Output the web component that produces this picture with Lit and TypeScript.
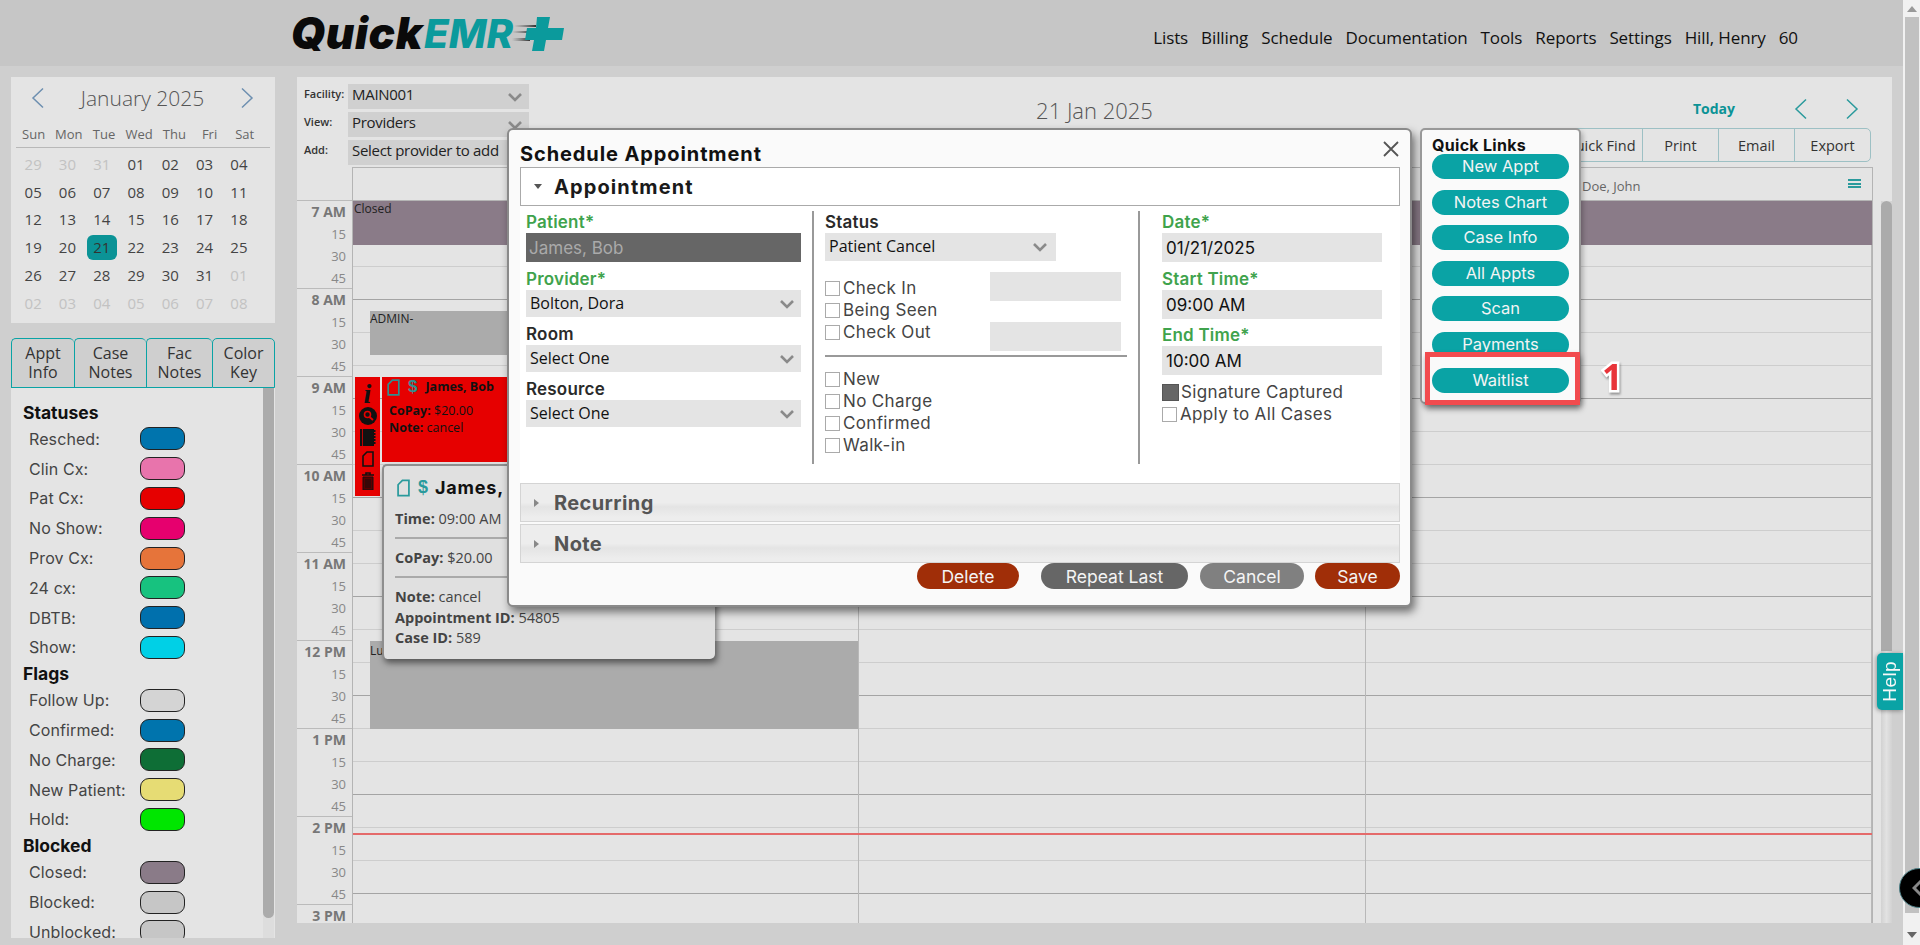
import { LitElement, html, css, svg } from "lit";
import { customElement } from "lit/decorators.js";

const chevronDown = html`<svg class="chev" width="16" height="10" viewBox="0 0 16 10"><path d="M2 2l6 6 6-6" fill="none" stroke="#8a8a8a" stroke-width="2.6"/></svg>`;
const arrowL = (c: string) => html`<svg width="14" height="22" viewBox="0 0 14 22"><path d="M12 1.5L2 11l10 9.5" fill="none" stroke="${c}" stroke-width="1.5"/></svg>`;
const arrowR = (c: string) => html`<svg width="14" height="22" viewBox="0 0 14 22"><path d="M2 1.5L12 11 2 20.5" fill="none" stroke="${c}" stroke-width="1.5"/></svg>`;
const fileIcon = (c: string, w = 12, h = 16) => html`<svg width="${w}" height="${h}" viewBox="0 0 12 16"><path d="M1 5l4-4h6v14H1z" fill="none" stroke="${c}" stroke-width="1.6"/></svg>`;

const weekdays = ["Sun", "Mon", "Tue", "Wed", "Thu", "Fri", "Sat"];
const days: [string, boolean][] = [
  ...["29", "30", "31"].map((d) => [d, true] as [string, boolean]),
  ...Array.from({ length: 31 }, (_, i) => [String(i + 1).padStart(2, "0"), false] as [string, boolean]),
  ...["01", "02", "03", "04", "05", "06", "07", "08"].map((d) => [d, true] as [string, boolean]),
];

const legend: { title: string; items: [string, string][] }[] = [
  { title: "Statuses", items: [["Resched:", "#0074ad"], ["Clin Cx:", "#e874ac"], ["Pat Cx:", "#e60000"], ["No Show:", "#e6006e"], ["Prov Cx:", "#e6743a"], ["24 cx:", "#17c27f"], ["DBTB:", "#0070ad"], ["Show:", "#00d0e6"]] },
  { title: "Flags", items: [["Follow Up:", "#d4d4d4"], ["Confirmed:", "#0074ad"], ["No Charge:", "#0e6e36"], ["New Patient:", "#e6dc74"], ["Hold:", "#00e600"]] },
  { title: "Blocked", items: [["Closed:", "#8a7b88"], ["Blocked:", "#c6c6c6"], ["Unblocked:", "#c6c6c6"]] },
];

const hours = ["7 AM", "8 AM", "9 AM", "10 AM", "11 AM", "12 PM", "1 PM", "2 PM"];
const slots = Array.from({ length: 22 }, (_, i) => i);

@customElement("app-root")
export class AppRoot extends LitElement {
  static styles = css`
    :host { display: block; position: relative; width: 1920px; height: 945px; overflow: hidden; background: #cfcfcf;
      font-family: "Open Sans", sans-serif; color: #222; --m: Inter, "Noto Sans", sans-serif; --teal: #0aa3a5; }
    * { box-sizing: border-box; }
    .page { display: flex; height: 945px; }
    .content { width: 1903px; }
    .header { height: 66px; background: #c6c6c6; display: flex; align-items: flex-start; position: relative; }
    .logo { margin: 11px 0 0 291px; display: flex; align-items: center; height: 45px; font-family: Inter, sans-serif; font-style: italic; font-size: 44px; line-height: 45px; }
    .logo .q { font-weight: 900; color: #0a0a0a; letter-spacing: .6px; }
    .logo .e { font-weight: 800; color: #0b9a9c; margin-left: 1px; font-size: 40px; }
    .logo svg { margin-left: -1px; }
    .nav { margin-left: auto; margin-right: 105px; margin-top: 27px; display: flex; gap: 13px; font-size: 17px; line-height: 22px; color: #111; letter-spacing: -.1px; }
    .body { display: flex; padding-top: 11px; }
    .side { width: 264px; margin-left: 11px; display: flex; flex-direction: column; }
    .cal { height: 246px; background: #e4e4e4; position: relative; padding: 0 5px; }
    .calhead { height: 44px; display: flex; align-items: center; justify-content: space-between; padding: 0 16px 3px 15px; }
    .calhead span { font-size: 21px; font-weight: 300; color: #555; }
    .wk { display: grid; grid-template-columns: repeat(7, 35.2px); height: 27px; align-items: center; border-bottom: 1px solid #b8b8b8; font-size: 13px; color: #666; text-align: center; width: 254px; }
    .daygrid { display: grid; grid-template-columns: repeat(7, 34.3px); grid-auto-rows: 27.8px; margin-top: 2px; text-align: center; font-size: 15px; color: #444; align-items: center; justify-items: center; }
    .daygrid .o { color: #c2c2c2; }
    .daygrid .t { width: 30px; height: 25px; line-height: 25px; background: #0b9396; border-radius: 6px; color: #333; }
    .tabs { display: grid; grid-template-columns: 63px 72px 66px 63px; height: 50px; margin-top: 15px; }
    .tab { border: 1.5px solid var(--teal); border-top-left-radius: 5px; border-top-right-radius: 5px; border-right-width: 0; text-align: center; font-size: 16px; line-height: 19px; padding-top: 5px; color: #333; }
    .tab:last-child { border-right-width: 1.5px; }
    .legendwrap { height: 550px; background: #e4e4e4; display: flex; position: relative; overflow: hidden; }
    .legend { width: 252px; padding: 14px 0 0 12px; font-family: var(--m); }
    .legend h3 { margin: 0; height: 22px; line-height: 22px; font-size: 17.5px; font-weight: 700; color: #111; }
    .legend .grp + .grp { margin-top: 1px; }
    .lrow { height: 29.8px; display: flex; align-items: center; padding-left: 6px; font-size: 16px; color: #444; font-weight: 400; }
    .lrow span { width: 111px; white-space: nowrap; letter-spacing: .1px; }
    .lrow i { display: block; width: 45px; height: 23px; border: 1px solid #222; border-radius: 9px; }
    .sb { width: 11px; position: absolute; right: 1px; top: 0; bottom: 0; background: #ddd; }
    .sb b { display: block; height: 530px; background: #ababab; border-radius: 0 0 6px 6px; }
    .main { width: 1595px; margin-left: 22px; height: 846px; background: #e4e4e4; display: flex; flex-direction: column; }
    .tools { height: 90px; display: grid; grid-template-columns: 1fr auto 1fr; flex: none; }
    .filters { padding: 7px 0 0 7px; display: flex; flex-direction: column; gap: 3px; }
    .frow { display: flex; align-items: center; }
    .frow label { width: 44px; font-size: 11px; font-weight: 600; color: #333; align-self: flex-start; line-height: 20px; }
    .fsel { width: 181px; height: 25px; background: #d0d0d0; display: flex; justify-content: space-between; align-items: center; padding: 0 6px 5px 4px; font-size: 15px; color: #222; letter-spacing: -.3px; white-space: nowrap; }
    .fsel .chev { margin-top: 5px; }
    .title { font-size: 22px; font-weight: 300; color: #555; padding-top: 18px; line-height: 30px; }
    .rt { display: flex; flex-direction: column; align-items: flex-end; padding-right: 21px; }
    .nav2 { display: flex; align-items: center; height: 51px; padding: 12px 12px 0 0; }
    .nav2 b { font-size: 14px; color: #0b9396; margin-right: 59px; }
    .nav2 svg + svg { margin-left: 37px; }
    .bar { display: flex; height: 34px; border: 1px solid #9dc0c4; border-radius: 0 5px 5px 0; font-size: 14.5px; color: #333; }
    .bar span { display: flex; align-items: center; justify-content: center; border-left: 1px solid #9dc0c4; width: 76px; }
    .bar span:first-child { border-left: 0; width: 84px; }
    .sched { flex: 1; display: flex; overflow: hidden; min-height: 0; }
    .times { width: 55px; padding-top: 33px; flex: none; overflow: hidden; }
    .hr { height: 88px; border-top: 1px solid #bbb; text-align: right; padding-right: 6px; font-size: 13px; color: #888; }
    .hr div { height: 21.9px; line-height: 22px; }
    .hr div:first-child { font-weight: 700; font-size: 14px; color: #777; }
    .gridbox { width: 1521px; border-left: 1px solid #b4b4b4; border-right: 1px solid #b4b4b4; border-top: 1px solid #b4b4b4; flex: none; display: flex; flex-direction: column; min-height: 0; }
    .colhead { height: 33px; flex: none; display: grid; grid-template-columns: 506px 507px 1fr; border-bottom: 1px solid #b4b4b4; }
    .colhead .c3 { position: relative; font-size: 13px; color: #666; padding: 9px 0 0 216px; }
    .ham { position: absolute; right: 11px; top: 11px; width: 13px; height: 9px; border-top: 2px solid #2a9a9c; border-bottom: 2px solid #2a9a9c; }
    .ham::after { content: ""; display: block; margin-top: 1.5px; height: 2px; background: #2a9a9c; }
    .cols { flex: 1; min-height: 0; position: relative; display: grid; grid-template-columns: 506px 507px 1fr; overflow: hidden; }
    .col { border-right: 1px solid #b8b8b8; }
    .col:last-of-type { border-right: 0; }
    .slot { height: 33px; border-bottom: 1px solid #cdcdcd; }
    .slot.d { border-bottom: 1px solid #a4a4a4; }
    .block { position: absolute; font-size: 12px; color: #222; line-height: 16px; }
    .closed { left: 0; right: 0; top: 0; height: 44px; background: #8a7b88; padding-left: 1px; }
    .admin { left: 17px; width: 488px; top: 110px; height: 44px; background: #ababab; }
    .lunch { left: 17px; width: 488px; top: 440px; height: 88px; background: #ababab; padding-top: 2px; }
    .nowline { position: absolute; left: 0; right: 0; top: 632px; height: 2px; background: #e46a6a; }
    .acts { position: absolute; left: 2px; top: 176px; width: 25px; height: 119px; background: #e60000; display: flex; flex-direction: column; align-items: center; padding-top: 8px; gap: 4px; }
    .acts .i { font-family: "Liberation Serif", serif; font-style: italic; font-weight: 700; font-size: 28px; line-height: 18px; color: #111; height: 18px; }
    .card { position: absolute; left: 29px; top: 176px; width: 476px; height: 85px; background: #e60000; color: #111; font-size: 12.5px; line-height: 16.5px; }
    .card .top { display: flex; align-items: center; gap: 8px; height: 20px; padding-left: 5px; font-weight: 700; font-size: 12.5px; }
    .dollar { color: #2f8f90; font-weight: 700; font-family: "Liberation Sans", sans-serif; }
    .card .dollar { font-size: 17px; }
    .card .l { padding-left: 7px; }
    .card .top + .l { margin-top: 6px; }
    .scr { width: 11px; margin: 34px 0 0 8px; flex: none; background: linear-gradient(90deg, #d2d2d2, #e2e2e2 50%, #d2d2d2); position: relative; }
    .scr b { display: block; height: 450px; background: #ababab; border-radius: 6px 6px 0 0; }
    .pagesb { width: 17px; height: 945px; background: #f1f1f1; position: relative; }
    .pagesb b { position: absolute; left: 2px; top: 17px; width: 14px; height: 896px; background: #c1c1c1; }
    .pagesb .up, .pagesb .dn { position: absolute; left: 4px; width: 0; height: 0; border-left: 5px solid transparent; border-right: 5px solid transparent; }
    .pagesb .up { top: 6px; border-bottom: 6px solid #999; }
    .pagesb .dn { top: 932px; border-top: 6px solid #666; }
    .help { position: absolute; left: 1877px; top: 653px; width: 26px; height: 57px; background: var(--teal); border-radius: 5px 0 0 5px; color: #f8f8f8; font-family: "Liberation Sans", sans-serif; font-size: 19px; display: flex; align-items: center; justify-content: center; box-shadow: -1px 1px 4px rgba(0,0,0,.35); }
    .help span { writing-mode: vertical-rl; transform: rotate(180deg); letter-spacing: .4px; }
    .fab { position: absolute; left: 1899px; top: 868px; width: 40px; height: 40px; border-radius: 50%; background: #000; border: 1.5px solid #4d7f86; display: flex; align-items: center; padding-left: 12px; }
    .tip { position: absolute; left: 382px; top: 464px; width: 333px; height: 195px; background: #e0e0e0; border: 2px solid #8e8e8e; border-width: 2px 0 0 2px; border-radius: 5px; box-shadow: 2px 4px 6px rgba(0,0,0,.5); padding: 0 0 0 11px; font-size: 14.5px; color: #444; }
    .tip .n { display: flex; align-items: center; gap: 8px; height: 43px; padding-left: 2px; }
    .tip .n .nm { font-family: var(--m); font-weight: 700; font-size: 18px; color: #111; letter-spacing: .8px; margin-left: -1px; }
    .tip .n .dollar { font-size: 18px; color: #2a9a9c; }
    .tip p { margin: 0; line-height: 20.5px; white-space: nowrap; }
    .tip b { font-weight: 700; }
    .tip hr { border: 0; height: 2px; background: #aaa; margin: 7px 13px 9.500px 0; }
    .dialog { position: absolute; left: 507px; top: 128px; width: 905px; height: 479px; background: #fafafa; border: 2px solid #8a8a8a; border-radius: 6px; box-shadow: 3px 5px 8px rgba(0,0,0,.5); padding: 0 10px 0 11px; font-family: var(--m); }
    .dtitle { height: 37px; display: flex; align-items: center; justify-content: space-between; font-size: 20px; font-weight: 700; color: #111; padding-top: 10px; letter-spacing: .9px; }
    .dtitle svg { margin-right: 1px; margin-top: -10px; }
    .acc { height: 39px; border: 1px solid #aaa; background: #fff; display: flex; align-items: center; padding-left: 13px; font-size: 20px; font-weight: 700; color: #1a1a1a; gap: 12px; letter-spacing: 1.1px; }
    .tri { width: 0; height: 0; border-left: 4px solid transparent; border-right: 4px solid transparent; border-top: 5px solid #555; }
    .form { height: 277px; background: #fff; display: flex; padding: 5px 0 0 6px; }
    .c1 { width: 275px; }
    .div { width: 2px; height: 253px; background: #999; margin: 0 11px; flex: none; }
    .c2 { width: 302px; }
    .c3r { width: 220px; margin-left: 11px; }
    .lb { height: 22px; line-height: 22px; font-size: 17px; font-weight: 600; color: #2a2a2a; margin-top: 6px; letter-spacing: .2px; white-space: nowrap; }
    .lb.first { margin-top: 0; }
    .lb.g { color: #3fa34d; }
    .lb.s { margin-top: 5px; }
    .in { height: 29px; background: #e4e4e4; padding: 0 4px; display: flex; align-items: center; justify-content: space-between; font-size: 17px; color: #111; }
    .in.dis { background: #666; color: #aaa; font-size: 17px; padding-left: 3px; }
    .in.sel { height: 27px; font-family: "Open Sans", sans-serif; font-size: 16px; padding: 0 6px 1.500px 4px; }
    .in.sel .chev { margin-top: 2px; }
    .in.st { width: 231px; height: 28px; padding-right: 8px; }
    .ck { height: 22px; display: flex; align-items: center; gap: 3px; font-size: 17px; color: #444; white-space: nowrap; letter-spacing: .35px; }
    .ck i { display: block; width: 15px; height: 15px; border: 1.5px solid #aaa; background: #fff; flex: none; }
    .ck i.on { background: #666; border-color: #555; width: 17px; height: 17px; margin-right: -1px; }
    .statusrow { display: flex; height: 94px; padding-top: 16px; }
    .statusrow .l { width: 165px; }
    .statusrow .f { width: 131px; margin-top: -5px; }
    .statusrow .f div { height: 29px; background: #e4e4e4; margin-bottom: 21px; }
    .hrl { height: 2px; background: #999; margin-bottom: 11px; }
    .gap6 { height: 6px; }
    .rch { height: 39px; border: 1px solid #d4d4d4; background: linear-gradient(#ededed 50%, #e4e4e4 62%, #ededed 90%); display: flex; align-items: center; padding-left: 13px; gap: 15px; font-size: 20px; font-weight: 700; color: #555; letter-spacing: .4px; margin-bottom: 2px; }
    .tri2 { width: 0; height: 0; border-top: 4px solid transparent; border-bottom: 4px solid transparent; border-left: 5px solid #888; }
    .btns { display: flex; justify-content: flex-end; height: 26px; margin-top: -2px; font-size: 17.5px; color: #f4f4f4; font-family: var(--m); }
    .btns span { display: flex; align-items: center; justify-content: center; border-radius: 13px; height: 26px; }
    .ql { position: absolute; left: 1420px; top: 128px; width: 161px; height: 276px; background: #fafafa; border: 2px solid #999; border-radius: 5px; padding: 5px 0 0 10px; font-family: var(--m); box-shadow: 2px 3px 5px rgba(0,0,0,.25); }
    .ql h4 { margin: 0; height: 19px; line-height: 20px; font-size: 16px; font-weight: 700; color: #111; letter-spacing: .3px; }
    .qb { width: 137px; height: 25px; margin-bottom: 10.6px; border-radius: 13px; background: var(--teal); color: #f4f4f4; text-align: center; line-height: 24px; font-size: 16.5px; }
    .qb.w { position: relative; z-index: 2; }
    .annot { position: absolute; left: 3px; top: 222px; width: 155px; height: 53px; border: 5px solid #f24b4e; background: #fafafa; z-index: 1; box-shadow: 1px 4px 6px rgba(0,0,0,.4); }
    .one { position: absolute; left: 1602px; top: 353px; font-family: "Open Sans", sans-serif; font-weight: 700; font-size: 36px; line-height: 48px; color: #e8343a; -webkit-text-stroke: 5px #fff; paint-order: stroke fill; filter: drop-shadow(1px 2px 1px rgba(0,0,0,.35)); }
  `;

  private field(label: string, value: string, cls = "") {
    return html`<div class="lb g ${cls}">${label}</div><div class="in">${value}</div>`;
  }

  private sel(label: string, value: string, green = false) {
    return html`<div class="lb ${green ? "g" : ""}">${label}</div><div class="in sel">${value}${chevronDown}</div>`;
  }

  render() {
    return html`
      <div class="page">
        <div class="content">
          <div class="header">
            <div class="logo">
              <span class="q">Quick</span><span class="e">EMR</span>
              <svg width="52" height="36" viewBox="0 0 52 36">
                ${svg`<defs><linearGradient id="sp" x1="0" x2="1"><stop offset="0" stop-color="#555" stop-opacity="0"/><stop offset="1" stop-color="#333"/></linearGradient></defs>
                <rect x="2" y="9" width="22" height="2" fill="url(#sp)"/>
                <rect x="0" y="15" width="20" height="2" fill="url(#sp)"/>
                <rect x="0" y="22" width="18" height="3" fill="url(#sp)"/>
                <path d="M25 1h13l-2 11h16l-2 12H34l-2 11H20l2-11H13l2-12h9z" fill="#0b9a9c"/>`}
              </svg>
            </div>
            <div class="nav">
              ${["Lists", "Billing", "Schedule", "Documentation", "Tools", "Reports", "Settings", "Hill, Henry", "60"].map((n) => html`<span>${n}</span>`)}
            </div>
          </div>
          <div class="body">
            <div class="side">
              <div class="cal">
                <div class="calhead">${arrowL("#6d8fb0")}<span>January 2025</span>${arrowR("#6d8fb0")}</div>
                <div class="wk">${weekdays.map((d) => html`<div>${d}</div>`)}</div>
                <div class="daygrid">
                  ${days.map(([d, o]) => html`<div class="${o ? "o" : d === "21" ? "t" : ""}">${d}</div>`)}
                </div>
              </div>
              <div class="tabs">
                ${[["Appt", "Info"], ["Case", "Notes"], ["Fac", "Notes"], ["Color", "Key"]].map(([a, b]) => html`<div class="tab">${a}<br />${b}</div>`)}
              </div>
              <div class="legendwrap">
                <div class="legend">
                  ${legend.map((g) => html`<div class="grp">
                    <h3>${g.title}</h3>
                    ${g.items.map(([l, c]) => html`<div class="lrow"><span>${l}</span><i style="background:${c}"></i></div>`)}
                  </div>`)}
                </div>
                <div class="sb"><b></b></div>
              </div>
            </div>
            <div class="main">
              <div class="tools">
                <div class="filters">
                  <div class="frow"><label>Facility:</label><div class="fsel">MAIN001${chevronDown}</div></div>
                  <div class="frow"><label>View:</label><div class="fsel">Providers${chevronDown}</div></div>
                  <div class="frow"><label>Add:</label><div class="fsel">Select provider to add</div></div>
                </div>
                <div class="title">21 Jan 2025</div>
                <div class="rt">
                  <div class="nav2"><b>Today</b>${arrowL("#2a9a9c")}${arrowR("#2a9a9c")}</div>
                  <div class="bar"><span>Quick Find</span><span>Print</span><span>Email</span><span>Export</span></div>
                </div>
              </div>
              <div class="sched">
                <div class="times">
                  ${hours.map((h) => html`<div class="hr"><div>${h}</div><div>15</div><div>30</div><div>45</div></div>`)}
                  <div class="hr"><div>3 PM</div></div>
                </div>
                <div class="gridbox">
                  <div class="colhead"><div></div><div></div><div class="c3">Doe, John<div class="ham"></div></div></div>
                  <div class="cols">
                    ${[0, 1, 2].map(() => html`<div class="col">${slots.map((i) => html`<div class="slot ${i % 3 === 2 ? "d" : ""}"></div>`)}</div>`)}
                    <div class="block closed">Closed</div>
                    <div class="block admin">ADMIN-</div>
                    <div class="block lunch">Lunch</div>
                    <div class="nowline"></div>
                    <div class="acts">
                      <div class="i">i</div>
                      <svg width="18" height="18" viewBox="0 0 18 18"><circle cx="9" cy="9" r="9" fill="#111"/><circle cx="8.500" cy="7.500" r="3" fill="none" stroke="#e60000" stroke-width="1.6"/><path d="M10.500 10l3.500 3" stroke="#e60000" stroke-width="2"/></svg>
                      <svg width="16" height="17" viewBox="0 0 16 17"><path d="M0 0h14v17H0z" fill="#111"/><path d="M14.500 1v15" stroke="#111" stroke-width="2" stroke-dasharray="2 1"/><path d="M2.500 0v17" stroke="#e60000" stroke-width=".8"/></svg>
                      ${fileIcon("#111", 12, 18)}
                      <svg width="14" height="18" viewBox="0 0 14 18"><path d="M1 3h12M5 3V1h4v2" fill="none" stroke="#111" stroke-width="1.6"/><path d="M2 5h10v13H2z" fill="#5a0000" stroke="#111"/><path d="M5 7v9M7 7v9M9 7v9" stroke="#111" stroke-width=".9"/></svg>
                    </div>
                    <div class="card">
                      <div class="top">${fileIcon("#2f8f90", 13, 17)}<span class="dollar">$</span><span>James, Bob</span></div>
                      <div class="l"><b>CoPay:</b> $20.00</div>
                      <div class="l"><b>Note:</b> cancel</div>
                    </div>
                  </div>
                </div>
                <div class="scr"><b></b></div>
              </div>
            </div>
          </div>
        </div>
        <div class="pagesb"><div class="up"></div><b></b><div class="dn"></div></div>
      </div>

      <div class="tip">
        <div class="n">${fileIcon("#2a9a9c", 13, 18)}<span class="dollar">$</span><span class="nm">James, Bob</span></div>
        <p><b>Time:</b> 09:00 AM</p>
        <hr />
        <p><b>CoPay:</b> $20.00</p>
        <hr />
        <p><b>Note:</b> cancel</p>
        <p><b>Appointment ID:</b> 54805</p>
        <p><b>Case ID:</b> 589</p>
      </div>

      <div class="dialog">
        <div class="dtitle"><span>Schedule Appointment</span>
          <svg width="16" height="16" viewBox="0 0 16 16"><path d="M1 1l14 14M15 1L1 15" stroke="#555" stroke-width="1.800"/></svg>
        </div>
        <div class="acc"><div class="tri"></div>Appointment</div>
        <div class="form">
          <div class="c1">
            <div class="lb g first">Patient*</div>
            <div class="in dis">James, Bob</div>
            ${this.sel("Provider*", "Bolton, Dora", true)}
            ${this.sel("Room", "Select One")}
            ${this.sel("Resource", "Select One")}
          </div>
          <div class="div"></div>
          <div class="c2">
            <div class="lb first">Status</div>
            <div class="in sel st">Patient Cancel${chevronDown}</div>
            <div class="statusrow">
              <div class="l">
                <div class="ck"><i></i>Check In</div>
                <div class="ck"><i></i>Being Seen</div>
                <div class="ck"><i></i>Check Out</div>
              </div>
              <div class="f"><div></div><div></div></div>
            </div>
            <div class="hrl"></div>
            <div class="ck"><i></i>New</div>
            <div class="ck"><i></i>No Charge</div>
            <div class="ck"><i></i>Confirmed</div>
            <div class="ck"><i></i>Walk-in</div>
          </div>
          <div class="div"></div>
          <div class="c3r">
            <div class="lb g first">Date*</div>
            <div class="in">01/21/2025</div>
            ${this.field("Start Time*", "09:00 AM")}
            ${this.field("End Time*", "10:00 AM", "s")}
            <div class="gap6"></div>
            <div class="ck"><i class="on"></i>Signature Captured</div>
            <div class="ck"><i></i>Apply to All Cases</div>
          </div>
        </div>
        <div class="rch"><div class="tri2"></div>Recurring</div>
        <div class="rch"><div class="tri2"></div>Note</div>
        <div class="btns">
          <span style="width:102px;background:#a02e08">Delete</span>
          <span style="width:147px;background:#666;margin-left:22px">Repeat Last</span>
          <span style="width:104px;background:#808080;margin-left:12px">Cancel</span>
          <span style="width:85px;background:#a02e08;margin-left:11px">Save</span>
        </div>
      </div>

      <div class="ql">
        <h4>Quick Links</h4>
        ${["New Appt", "Notes Chart", "Case Info", "All Appts", "Scan", "Payments"].map((q) => html`<div class="qb">${q}</div>`)}
        <div class="qb w">Waitlist</div>
        <div class="annot"></div>
      </div>
      <div class="one">1</div>

      <div class="help"><span>Help</span></div>
      <div class="fab"><svg width="10" height="18" viewBox="0 0 10 18"><path d="M9 2L2 9l7 7" fill="none" stroke="#888" stroke-width="3"/></svg></div>
    `;
  }
}
